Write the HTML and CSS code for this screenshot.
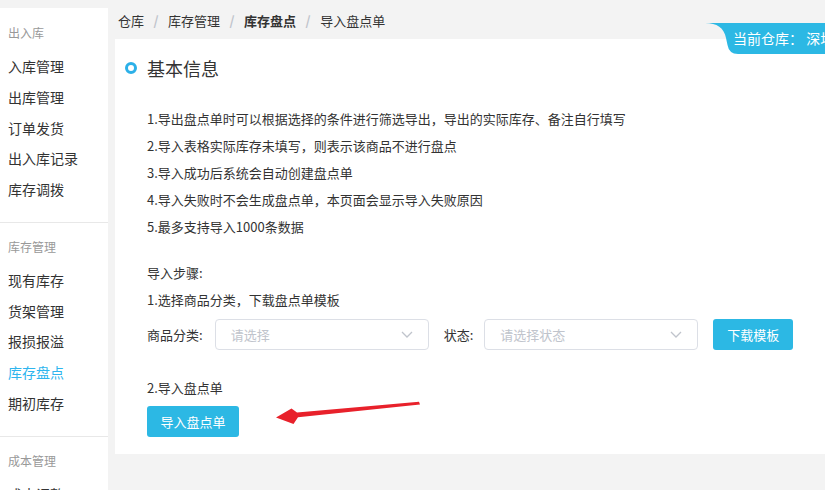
FILE: index.html
```html
<!DOCTYPE html>
<html lang="zh-CN">
<head>
<meta charset="utf-8">
<title>导入盘点单</title>
<link rel="stylesheet" href="styles.css">
</head>
<body>
<div class="layout">
  <aside class="sidebar">
    <div class="group">
      <div class="group-title">出入库</div>
      <a class="item">入库管理</a>
      <a class="item">出库管理</a>
      <a class="item">订单发货</a>
      <a class="item">出入库记录</a>
      <a class="item">库存调拨</a>
    </div>
    <div class="group">
      <div class="group-title">库存管理</div>
      <a class="item">现有库存</a>
      <a class="item">货架管理</a>
      <a class="item">报损报溢</a>
      <a class="item active">库存盘点</a>
      <a class="item">期初库存</a>
    </div>
    <div class="group">
      <div class="group-title">成本管理</div>
      <a class="item">成本调整</a>
    </div>
  </aside>
  <main class="main">
    <nav class="crumbs">
      <span class="crumb">仓库</span><span class="sep">/</span>
      <span class="crumb">库存管理</span><span class="sep">/</span>
      <span class="crumb current">库存盘点</span><span class="sep">/</span>
      <span class="crumb">导入盘点单</span>
    </nav>
    <section class="card">
      <h2 class="card-title"><span class="dot"></span>基本信息</h2>
      <ul class="notes">
        <li>1.导出盘点单时可以根据选择的条件进行筛选导出，导出的实际库存、备注自行填写</li>
        <li>2.导入表格实际库存未填写，则表示该商品不进行盘点</li>
        <li>3.导入成功后系统会自动创建盘点单</li>
        <li>4.导入失败时不会生成盘点单，本页面会显示导入失败原因</li>
        <li>5.最多支持导入1000条数据</li>
      </ul>
      <p class="steps-title">导入步骤:</p>
      <p class="step">1.选择商品分类，下载盘点单模板</p>
      <div class="form-row">
        <label class="label">商品分类:</label>
        <div class="select"><span class="placeholder">请选择</span>
          <svg class="chev" viewBox="0 0 12 7" width="12" height="7"><path d="M1 1l5 5 5-5" fill="none" stroke="#c0c4cc" stroke-width="1.3"/></svg>
        </div>
        <label class="label label-state">状态:</label>
        <div class="select"><span class="placeholder">请选择状态</span>
          <svg class="chev" viewBox="0 0 12 7" width="12" height="7"><path d="M1 1l5 5 5-5" fill="none" stroke="#c0c4cc" stroke-width="1.3"/></svg>
        </div>
        <button class="btn btn-download">下载模板</button>
      </div>
      <p class="step step2">2.导入盘点单</p>
      <button class="btn btn-import">导入盘点单</button>
    </section>
  </main>
</div>
<div class="badge">
  <svg class="badge-bg" viewBox="0 0 120 31" width="120" height="31" preserveAspectRatio="none"><path d="M0 0 H120 V31 H33 Q24 31 22.5 22 L21 15 C19 5 12 0 0 0 Z" fill="#2cb8e4"/></svg>
  <span class="badge-text">当前仓库： 深圳仓</span>
</div>
<svg class="arrow" viewBox="0 0 825 490" width="825" height="490">
  <polygon points="419,401.8 420,404.6 298,417.2 293.5,424 276,417.6 291.5,408.6 297,412.6" fill="#e8212b"/>
</svg>
</body>
</html>
```

FILE: styles.css
```css
* { box-sizing: border-box; }
html, body { margin: 0; padding: 0; }
body {
  background: #f3f3f3;
  font-family: "Noto Sans CJK SC", "Noto Sans", sans-serif;
  color: #333;
  width: 825px;
  height: 490px;
  overflow: hidden;
  position: relative;
}
.layout {
  display: grid;
  grid-template-columns: 108px 1fr;
  height: 490px;
}
.sidebar {
  margin-top: 8px;
  background: #fff;
  padding-top: 1px;
  overflow: hidden;
}
.group {
  padding: 14px 0 17px;
  border-bottom: 1px solid #e8e8e8;
}
.group-title {
  font-size: 12px;
  line-height: 20px;
  color: #999;
  padding-left: 8px;
  margin-bottom: 8px;
}
.item {
  display: block;
  font-size: 14px;
  line-height: 30.75px;
  color: #333;
  padding-left: 8px;
}
.item.active { color: #2eb5ee; }
.main {
  padding-left: 7px;
  min-width: 0;
}
.crumbs {
  height: 39px;
  padding: 11px 0 0 3px;
  font-size: 13px;
  line-height: 20px;
  display: flex;
}
.crumb { color: #333; }
.crumb.current { font-weight: bold; }
.sep {
  color: #c0c4cc;
  font-weight: bold;
  margin: 0 9.5px;
}
.card {
  background: #fff;
  padding: 17px 0 17px 32px;
  font-size: 13px;
}
.card-title {
  margin: 0 0 24.5px -22px;
  font-size: 18px;
  font-weight: normal;
  line-height: 24px;
  display: flex;
  align-items: center;
  color: #333;
}
.dot {
  width: 12px;
  height: 12px;
  border: 3px solid #2cb0e8;
  border-radius: 50%;
  margin-right: 10px;
}
.notes {
  list-style: none;
  margin: 0;
  padding: 0;
  line-height: 27px;
}
.steps-title {
  margin: 19px 0 0;
  line-height: 27px;
}
.step {
  margin: 0;
  line-height: 27px;
}
.form-row {
  display: flex;
  align-items: center;
  height: 31px;
  margin-top: 6.5px;
}
.label { margin-right: 12px; }
.label-state { margin-left: 15px; margin-right: 11px; }
.select {
  width: 214px;
  height: 31px;
  border: 1px solid #dcdfe6;
  border-radius: 4px;
  display: flex;
  align-items: center;
  justify-content: space-between;
  padding: 0 15px 0 15px;
}
.placeholder { color: #c0c4cc; }
.chev { display: block; }
.btn {
  font-family: inherit;
  font-size: 13px;
  color: #fff;
  background: #2cb8e4;
  border: none;
  border-radius: 3px;
  height: 31px;
  padding: 0;
  cursor: pointer;
}
.btn-download { width: 80px; margin-left: 15px; }
.step2 { margin-top: 23.5px; }
.btn-import {
  display: block;
  width: 92px;
  margin-top: 5.5px;
}
.badge {
  position: absolute;
  top: 23px;
  right: 0;
  width: 120px;
  height: 31px;
}
.badge-bg { position: absolute; left: 0; top: 0; }
.badge-text {
  position: absolute;
  left: 28px;
  top: 0;
  line-height: 31px;
  font-size: 14px;
  color: #fff;
  white-space: nowrap;
}
.arrow {
  position: absolute;
  left: 0;
  top: 0;
  pointer-events: none;
}
```
